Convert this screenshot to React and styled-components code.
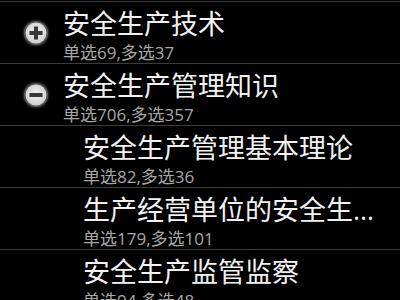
import React from "react";
import styled, { createGlobalStyle } from "styled-components";

const GlobalStyle = createGlobalStyle`
  html, body {
    margin: 0;
    padding: 0;
    background: #000;
  }
  body {
    width: 400px;
    height: 300px;
    overflow: hidden;
    font-family: "Open Sans", "Noto Sans CJK SC", sans-serif;
  }
`;

const List = styled.div`
  padding-top: 1px;
  background: #000;
`;

const Row = styled.div`
  display: flex;
  align-items: center;
  height: 61px;
  border-top: 1px solid #3c3c3c;
  padding-left: ${props => (props.child ? "83px" : "0")};
  padding-right: 18px;
`;

const IconCell = styled.div`
  width: 63px;
  flex: none;
  display: flex;
  justify-content: center;
  padding-left: 8px;
  box-sizing: border-box;
`;

const Texts = styled.div`
  flex: 1;
  min-width: 0;
  align-self: flex-start;
  padding-top: 3px;
`;

const Title = styled.div`
  color: #f2f2f2;
  font-size: 27px;
  line-height: 37px;
  white-space: nowrap;
  overflow: hidden;
  text-overflow: ellipsis;
`;

const Sub = styled.div`
  color: #a8a8a8;
  font-size: 17px;
  line-height: 21px;
  white-space: nowrap;
`;

function ToggleIcon({ open }) {
  const g = open ? "gm" : "gp";
  const h = open ? "hm" : "hp";
  return (
    <svg width="32" height="32" viewBox="0 0 32 32">
      <defs>
        <radialGradient id={g} cx="50%" cy="45%" r="55%">
          <stop offset="0%" stopColor="#f4f4f4" />
          <stop offset="100%" stopColor="#cfcfcf" />
        </radialGradient>
        <radialGradient id={h} cx="50%" cy="50%" r="50%">
          <stop offset="65%" stopColor="#a0a0a0" />
          <stop offset="100%" stopColor="#000" stopOpacity="0" />
        </radialGradient>
      </defs>
      <circle cx="16" cy="16" r="15" fill={`url(#${h})`} />
      <circle cx="16" cy="16" r="12" fill="#555" />
      <circle cx="16" cy="16" r="10.5" fill={`url(#${g})`} />
      <rect x="9.5" y="14" width="13" height="4" fill="#383838" />
      {!open && <rect x="14" y="9.5" width="4" height="13" fill="#383838" />}
    </svg>
  );
}

const items = [
  { title: "安全生产技术", sub: "单选69,多选37", icon: "plus" },
  { title: "安全生产管理知识", sub: "单选706,多选357", icon: "minus" },
  { title: "安全生产管理基本理论", sub: "单选82,多选36", child: true },
  { title: "生产经营单位的安全生产保障", sub: "单选179,多选101", child: true },
  { title: "安全生产监管监察", sub: "单选94,多选48", child: true }
];

export default function App() {
  return (
    <>
      <GlobalStyle />
      <List>
        {items.map(item => (
          <Row key={item.title} child={item.child ? 1 : 0}>
            {!item.child && (
              <IconCell>
                <ToggleIcon open={item.icon === "minus"} />
              </IconCell>
            )}
            <Texts>
              <Title>{item.title}</Title>
              <Sub>{item.sub}</Sub>
            </Texts>
          </Row>
        ))}
      </List>
    </>
  );
}
